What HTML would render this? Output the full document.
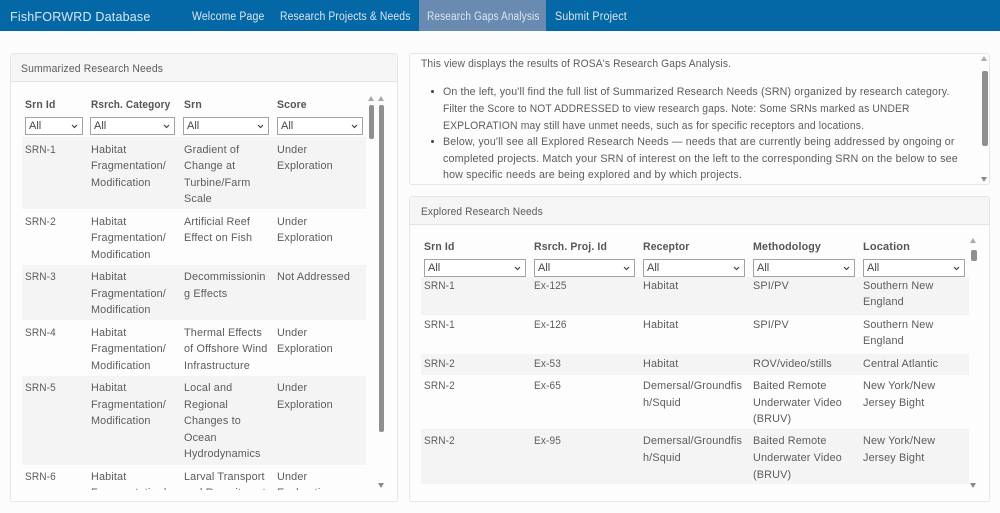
<!DOCTYPE html>
<html><head><meta charset="utf-8"><title>FishFORWRD Database</title>
<style>
html,body{margin:0;padding:0;width:1000px;height:513px;overflow:hidden;background:#fcfcfc;}
body{position:relative;font-family:"Liberation Sans",sans-serif;font-size:11.3px;color:#5c5c5c;}
#w{position:absolute;left:0;top:0;width:1000px;height:513px;overflow:hidden;filter:blur(.35px);}
.a{position:absolute;}
.t{position:absolute;white-space:nowrap;line-height:16px;height:16px;letter-spacing:.15px;margin-top:1px;transform:scaleX(.96);transform-origin:0 50%;}
.r{transform:scaleX(.89);}
.h{font-weight:bold;color:#555;font-size:11px;transform:scaleX(.95);}
.n{color:#d8e6f0;font-size:11.5px;top:8px;}
.p{position:absolute;background:#fdfdfd;border:1px solid #e6e6e6;border-radius:3px;box-sizing:border-box;}
.ph{position:absolute;background:#f5f5f5;border-bottom:1px solid #e4e4e4;box-sizing:border-box;border-radius:3px 3px 0 0;}
.s{position:absolute;box-sizing:border-box;height:18px;background:#fff;border:1px solid #a2a2a2;color:#444;font-size:11px;line-height:16px;padding-left:3px;}
.s svg{position:absolute;right:4px;top:6px;}
.g{position:absolute;background:#f4f4f4;}
.th{position:absolute;background:#8f8f8f;border-radius:2px;}
.u,.d{position:absolute;width:0;height:0;border-left:3.5px solid transparent;border-right:3.5px solid transparent;}
.u{border-bottom:5px solid #aaa;}
.d{border-top:5px solid #8a8a8a;}
.b{position:absolute;width:3px;height:3px;border-radius:50%;background:#444;}
.c{position:absolute;overflow:hidden;}
</style></head><body><div id="w">
<div class="a" style="left:0;top:0;width:1000px;height:31px;background:#0568a6"></div>
<div class="a" style="left:419px;top:0;width:127px;height:31px;background:#6a8bb1"></div>
<div class="t" style="left:10px;top:8px;color:#d8e6f0;font-size:13.2px;letter-spacing:.2px;transform:scaleX(.95)">FishFORWRD Database</div>
<div class="t n" style="left:192px;transform:scaleX(.91)">Welcome Page</div>
<div class="t n" style="left:280px;transform:scaleX(.9)">Research Projects &amp; Needs</div>
<div class="t n" style="left:427px;transform:scaleX(.875)">Research Gaps Analysis</div>
<div class="t n" style="left:555px;transform:scaleX(.935)">Submit Project</div>

<div class="p" style="left:10px;top:53px;width:388px;height:449px"></div>
<div class="ph" style="left:11px;top:54px;width:386px;height:28px"></div>
<div class="t" style="left:21px;top:60px;transform:scaleX(.92)">Summarized Research Needs</div>

<div class="t h" style="left:25px;top:96px">Srn Id</div>
<div class="t h" style="left:91px;top:96px;transform:scaleX(.91)">Rsrch. Category</div>
<div class="t h" style="left:184px;top:96px">Srn</div>
<div class="t h" style="left:277px;top:96px">Score</div>

<div class="s" style="left:25px;top:117px;width:58px">All<svg width="7" height="5"><path d="M1 1l2.5 2.5L6 1" fill="none" stroke="#444" stroke-width="1.2"/></svg></div>
<div class="s" style="left:90px;top:117px;width:85px">All<svg width="7" height="5"><path d="M1 1l2.5 2.5L6 1" fill="none" stroke="#444" stroke-width="1.2"/></svg></div>
<div class="s" style="left:183px;top:117px;width:86px">All<svg width="7" height="5"><path d="M1 1l2.5 2.5L6 1" fill="none" stroke="#444" stroke-width="1.2"/></svg></div>
<div class="s" style="left:277px;top:117px;width:86px">All<svg width="7" height="5"><path d="M1 1l2.5 2.5L6 1" fill="none" stroke="#444" stroke-width="1.2"/></svg></div>

<div class="c" style="left:22px;top:137px;width:344px;height:353px">
<div class="g" style="left:0;top:0;width:344px;height:72px"></div>
<div class="g" style="left:0;top:128px;width:344px;height:55px"></div>
<div class="g" style="left:0;top:239px;width:344px;height:89px"></div>
<div class="t r" style="left:3px;top:4px">SRN-1</div>
<div class="t" style="left:69px;top:4px">Habitat</div><div class="t" style="left:69px;top:20px">Fragmentation/</div><div class="t" style="left:69px;top:37px">Modification</div>
<div class="t" style="left:162px;top:4px">Gradient of</div><div class="t" style="left:162px;top:20px">Change at</div><div class="t" style="left:162px;top:37px">Turbine/Farm</div><div class="t" style="left:162px;top:53px">Scale</div>
<div class="t" style="left:255px;top:4px">Under</div><div class="t" style="left:255px;top:20px">Exploration</div>

<div class="t r" style="left:3px;top:76px">SRN-2</div>
<div class="t" style="left:69px;top:76px">Habitat</div><div class="t" style="left:69px;top:92px">Fragmentation/</div><div class="t" style="left:69px;top:109px">Modification</div>
<div class="t" style="left:162px;top:76px">Artificial Reef</div><div class="t" style="left:162px;top:92px">Effect on Fish</div>
<div class="t" style="left:255px;top:76px">Under</div><div class="t" style="left:255px;top:92px">Exploration</div>

<div class="t r" style="left:3px;top:131px">SRN-3</div>
<div class="t" style="left:69px;top:131px">Habitat</div><div class="t" style="left:69px;top:148px">Fragmentation/</div><div class="t" style="left:69px;top:164px">Modification</div>
<div class="t" style="left:162px;top:131px">Decommissionin</div><div class="t" style="left:162px;top:148px">g Effects</div>
<div class="t" style="left:255px;top:131px">Not Addressed</div>

<div class="t r" style="left:3px;top:187px">SRN-4</div>
<div class="t" style="left:69px;top:187px">Habitat</div><div class="t" style="left:69px;top:203px">Fragmentation/</div><div class="t" style="left:69px;top:220px">Modification</div>
<div class="t" style="left:162px;top:187px">Thermal Effects</div><div class="t" style="left:162px;top:203px">of Offshore Wind</div><div class="t" style="left:162px;top:220px">Infrastructure</div>
<div class="t" style="left:255px;top:187px">Under</div><div class="t" style="left:255px;top:203px">Exploration</div>

<div class="t r" style="left:3px;top:242px">SRN-5</div>
<div class="t" style="left:69px;top:242px">Habitat</div><div class="t" style="left:69px;top:259px">Fragmentation/</div><div class="t" style="left:69px;top:275px">Modification</div>
<div class="t" style="left:162px;top:242px">Local and</div><div class="t" style="left:162px;top:259px">Regional</div><div class="t" style="left:162px;top:275px">Changes to</div><div class="t" style="left:162px;top:292px">Ocean</div><div class="t" style="left:162px;top:308px">Hydrodynamics</div>
<div class="t" style="left:255px;top:242px">Under</div><div class="t" style="left:255px;top:259px">Exploration</div>

<div class="t r" style="left:3px;top:331px">SRN-6</div>
<div class="t" style="left:69px;top:331px">Habitat</div><div class="t" style="left:69px;top:347px">Fragmentation/</div>
<div class="t" style="left:162px;top:331px">Larval Transport</div><div class="t" style="left:162px;top:347px">and Recruitment</div>
<div class="t" style="left:255px;top:331px">Under</div><div class="t" style="left:255px;top:347px">Exploration</div>
</div>

<div class="u" style="left:368px;top:96px"></div><div class="th" style="left:369px;top:105px;width:5px;height:34px"></div>
<div class="u" style="left:378px;top:96px"></div><div class="th" style="left:379px;top:105px;width:5px;height:327px"></div>
<div class="d" style="left:378px;top:483px"></div>

<div class="p" style="left:409px;top:53px;width:581px;height:132px"></div>
<div class="t" style="left:421px;top:55px;transform:scaleX(.91)">This view displays the results of ROSA's Research Gaps Analysis.</div>
<div class="b" style="left:431px;top:90px"></div>
<div class="t" style="left:443px;top:83px;transform:scaleX(.94)">On the left, you'll find the full list of Summarized Research Needs (SRN) organized by research category.</div>
<div class="t" style="left:443px;top:100px;transform:scaleX(.91)">Filter the Score to NOT ADDRESSED to view research gaps. Note: Some SRNs marked as UNDER</div>
<div class="t" style="left:443px;top:117px;transform:scaleX(.92)">EXPLORATION may still have unmet needs, such as for specific receptors and locations.</div>
<div class="b" style="left:431px;top:140px"></div>
<div class="t" style="left:443px;top:133px;transform:scaleX(.943)">Below, you'll see all Explored Research Needs — needs that are currently being addressed by ongoing or</div>
<div class="t" style="left:443px;top:150px;transform:scaleX(.955)">completed projects. Match your SRN of interest on the left to the corresponding SRN on the below to see</div>
<div class="t" style="left:443px;top:166px;transform:scaleX(.946)">how specific needs are being explored and by which projects.</div>
<div class="u" style="left:981px;top:56px"></div><div class="th" style="left:982px;top:71px;width:6px;height:75px"></div><div class="d" style="left:981px;top:177px"></div>

<div class="p" style="left:409px;top:196px;width:581px;height:306px"></div>
<div class="ph" style="left:410px;top:197px;width:579px;height:28px"></div>
<div class="t" style="left:421px;top:203px;transform:scaleX(.9)">Explored Research Needs</div>

<div class="t h" style="left:424px;top:238px">Srn Id</div>
<div class="t h" style="left:534px;top:238px">Rsrch. Proj. Id</div>
<div class="t h" style="left:643px;top:238px">Receptor</div>
<div class="t h" style="left:753px;top:238px;transform:scaleX(.97)">Methodology</div>
<div class="t h" style="left:863px;top:238px;transform:scaleX(1)">Location</div>

<div class="s" style="left:424px;top:259px;width:102px">All<svg width="7" height="5"><path d="M1 1l2.5 2.5L6 1" fill="none" stroke="#444" stroke-width="1.2"/></svg></div>
<div class="s" style="left:534px;top:259px;width:101px">All<svg width="7" height="5"><path d="M1 1l2.5 2.5L6 1" fill="none" stroke="#444" stroke-width="1.2"/></svg></div>
<div class="s" style="left:643px;top:259px;width:102px">All<svg width="7" height="5"><path d="M1 1l2.5 2.5L6 1" fill="none" stroke="#444" stroke-width="1.2"/></svg></div>
<div class="s" style="left:753px;top:259px;width:102px">All<svg width="7" height="5"><path d="M1 1l2.5 2.5L6 1" fill="none" stroke="#444" stroke-width="1.2"/></svg></div>
<div class="s" style="left:863px;top:259px;width:102px">All<svg width="7" height="5"><path d="M1 1l2.5 2.5L6 1" fill="none" stroke="#444" stroke-width="1.2"/></svg></div>

<div class="g" style="left:421px;top:277px;width:548px;height:38px"></div>
<div class="g" style="left:421px;top:354px;width:548px;height:21px"></div>
<div class="g" style="left:421px;top:429px;width:548px;height:55px"></div>

<div class="t r" style="left:424px;top:277px">SRN-1</div><div class="t r" style="left:534px;top:277px">Ex-125</div><div class="t" style="left:643px;top:277px">Habitat</div><div class="t" style="left:753px;top:277px">SPI/PV</div><div class="t" style="left:863px;top:277px">Southern New</div><div class="t" style="left:863px;top:293px">England</div>
<div class="t r" style="left:424px;top:316px">SRN-1</div><div class="t r" style="left:534px;top:316px">Ex-126</div><div class="t" style="left:643px;top:316px">Habitat</div><div class="t" style="left:753px;top:316px">SPI/PV</div><div class="t" style="left:863px;top:316px">Southern New</div><div class="t" style="left:863px;top:332px">England</div>
<div class="t r" style="left:424px;top:355px">SRN-2</div><div class="t r" style="left:534px;top:355px">Ex-53</div><div class="t" style="left:643px;top:355px">Habitat</div><div class="t" style="left:753px;top:355px">ROV/video/stills</div><div class="t" style="left:863px;top:355px">Central Atlantic</div>
<div class="t r" style="left:424px;top:377px">SRN-2</div><div class="t r" style="left:534px;top:377px">Ex-65</div><div class="t" style="left:643px;top:377px">Demersal/Groundfis</div><div class="t" style="left:643px;top:394px">h/Squid</div><div class="t" style="left:753px;top:377px">Baited Remote</div><div class="t" style="left:753px;top:394px">Underwater Video</div><div class="t" style="left:753px;top:410px">(BRUV)</div><div class="t" style="left:863px;top:377px">New York/New</div><div class="t" style="left:863px;top:394px">Jersey Bight</div>
<div class="t r" style="left:424px;top:432px">SRN-2</div><div class="t r" style="left:534px;top:432px">Ex-95</div><div class="t" style="left:643px;top:432px">Demersal/Groundfis</div><div class="t" style="left:643px;top:449px">h/Squid</div><div class="t" style="left:753px;top:432px">Baited Remote</div><div class="t" style="left:753px;top:449px">Underwater Video</div><div class="t" style="left:753px;top:466px">(BRUV)</div><div class="t" style="left:863px;top:432px">New York/New</div><div class="t" style="left:863px;top:449px">Jersey Bight</div>

<div class="u" style="left:970px;top:238px"></div><div class="th" style="left:971px;top:250px;width:6px;height:11px"></div><div class="d" style="left:970px;top:483px"></div>
</div></body></html>
